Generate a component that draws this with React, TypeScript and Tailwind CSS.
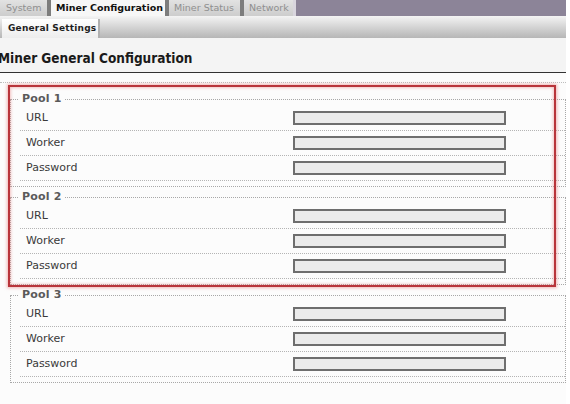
import React from "react";

const tabs = [
  { label: "System", active: false, w: "w-[47px]" },
  { label: "Miner Configuration", active: true, w: "w-[118px]" },
  { label: "Miner Status", active: false, w: "w-[75px]" },
  { label: "Network", active: false, w: "w-[53px]" },
];

const fields = ["URL", "Worker", "Password"];

function Pool({ n, first }: { n: number; first?: boolean }) {
  return (
    <fieldset
      className={`ml-[10px] w-[556px] border border-dotted border-[#a8a8a8] pb-[5px] ${
        first ? "mt-[9px]" : "mt-[3px]"
      }`}
    >
      <legend className="ml-[8px] px-[3px] h-[14px] leading-[14px] text-[11px] font-bold text-[#5a5a5a] tracking-[0.2px]">
        Pool {n}
      </legend>
      {fields.map((f) => (
        <div
          key={f}
          className="ml-[9px] h-[25px] grid grid-cols-[267px_213px] items-center pl-[6px] border-b border-dotted border-[#b4b4b4]"
        >
          <span className="text-[11px] text-[#3a3a3a]">{f}</span>
          <input
            type={f === "Password" ? "password" : "text"}
            className="h-[14px] w-[213px] border-2 border-[#6e6e6e] bg-[#ebebeb] outline-none"
          />
        </div>
      ))}
    </fieldset>
  );
}

export default function App() {
  return (
    <div className="relative w-[570px] h-[404px] overflow-hidden bg-white font-['DejaVu_Sans',sans-serif]">
      <div className="w-[566px]">
        {/* top tabs */}
        <div className="flex h-[16px] bg-[#8c8498]">
          {tabs.map((t, i) => (
            <div
              key={t.label}
              className={`${t.w} flex items-center whitespace-nowrap text-[9.5px] ${
                i > 0 ? "border-l-[4px] border-[#7d7d7d] pl-[5px]" : "pl-[6px]"
              } ${
                t.active
                  ? "bg-[#f7f7f7] font-bold text-[#111]"
                  : "bg-gradient-to-b from-[#e2e2e2] to-[#cdcdcd] text-[#8f8f8f]"
              }`}
            >
              {t.label}
            </div>
          ))}
          <div className="w-[3px] bg-[#d9d6de]" />
        </div>

        {/* sub tabs */}
        <div className="flex h-[22px] bg-gradient-to-b from-[#f4f4f4] to-[#b6b6b6]">
          <div className="mt-[3px] ml-[2px] w-[98px] flex items-center whitespace-nowrap pl-[6px] text-[9px] font-bold tracking-[0.2px] text-[#1e1e1e] bg-gradient-to-b from-white to-[#ededed] border-r-2 border-[#b0b0b0]">
            General Settings
          </div>
        </div>

        {/* heading */}
        <div className="bg-[#f4f4f4] pt-[11px] pb-[5px] border-b border-[#333]">
          <h1 className="-ml-[2px] h-[18px] leading-[18px] whitespace-nowrap text-[13.5px] font-bold font-['DejaVu_Sans_Condensed','DejaVu_Sans',sans-serif] font-stretch-condensed text-[#1a1a1a]">
            Miner General Configuration
          </h1>
        </div>

        {/* pools */}
        <div className="bg-[#fcfcfc] pt-[9px] h-[400px]">
          <div className="border-t border-dotted border-[#bdbdbd]" />
          <Pool n={1} first />
          <Pool n={2} />
          <Pool n={3} />
        </div>
      </div>

      {/* red highlight drawn over the screenshot */}
      <div className="absolute left-[8px] top-[85px] w-[548px] h-[202px] border-2 border-[#b8343a] shadow-[0_0_3px_1px_rgba(230,120,120,0.55),inset_0_0_3px_1px_rgba(230,120,120,0.45)] pointer-events-none" />
    </div>
  );
}
